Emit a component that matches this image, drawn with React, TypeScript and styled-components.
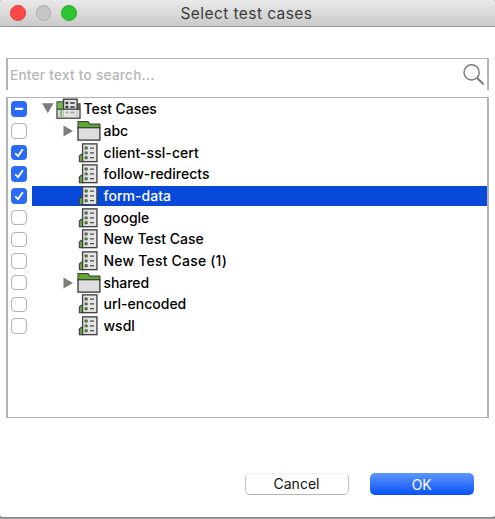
import React from "react";
import styled, { createGlobalStyle } from "styled-components";

const Global = createGlobalStyle`
  * { box-sizing: border-box; }
  html, body { margin: 0; padding: 0; background: #cfcfcf; }
  body { font-family: Inter, "Liberation Sans", sans-serif; overflow: hidden; }
`;

const Backdrop = styled.div`
  height: 519px;
  background: linear-gradient(#b4b4b4 0 516px, #7c7c7c 517px, #a8a8a8 519px);
`;

const Dialog = styled.div`
  width: 495px;
  height: 517px;
  background: #fff;
  border-radius: 3px;
  overflow: hidden;
  display: flex;
  flex-direction: column;
`;

const TitleBar = styled.header`
  height: 27px;
  flex: none;
  display: flex;
  align-items: center;
  background: linear-gradient(#e9e9e9, #cacaca);
  border-bottom: 1px solid #989898;
`;

const Lights = styled.div`
  display: flex;
  gap: 10px;
  padding-left: 10px;
  width: 180.5px;
`;

const Light = styled.span<{ $fill: string; $edge: string }>`
  width: 15.7px;
  height: 15.7px;
  border-radius: 50%;
  background: ${(p) => p.$fill};
  border: 1px solid ${(p) => p.$edge};
`;

const Title = styled.h1`
  margin: 0;
  padding-top: 2px;
  font-size: 15.5px;
  line-height: 24px;
  font-weight: 400;
  color: #3c3c3c;
  letter-spacing: 0.42px;
  white-space: nowrap;
`;

const SearchField = styled.label`
  flex: none;
  margin: 31px 6px 0;
  height: 32px;
  display: flex;
  align-items: center;
  justify-content: space-between;
  border: solid #b4b4b4;
  border-width: 1px 2px 0;
  padding: 0 2px 0 2px;
`;

const SearchInput = styled.input`
  flex: 1;
  border: 0;
  outline: 0;
  padding: 0;
  background: transparent;
  font: 500 13.5px Inter, sans-serif;
  letter-spacing: 0.3px;
  &::placeholder { color: #b5b5b5; opacity: 1; }
`;

const Tree = styled.ul`
  flex: none;
  list-style: none;
  margin: 7px 6px 0;
  padding: 0.3px 0 0;
  height: 321px;
  border: solid #b4b4b4;
  border-width: 1px 2px;
`;

const Row = styled.li`
  height: 21.7px;
  display: flex;
  align-items: center;
  padding-left: 3px;
`;

const Check = styled.span<{ $on: boolean }>`
  width: 16px;
  height: 15.5px;
  flex: none;
  margin-right: 5px;
  border-radius: 4px;
  display: flex;
  background: ${(p) => (p.$on ? "#2b69f8" : "#fff")};
  border: ${(p) => (p.$on ? "0" : "1px solid #b4b4b4")};
  box-shadow: ${(p) => (p.$on ? "none" : "inset 0 0 1px #ccc")};
`;

const Item = styled.div<{ $depth: number; $selected: boolean }>`
  flex: 1;
  height: 20px;
  display: flex;
  align-items: center;
  padding-left: ${(p) => 9.5 + p.$depth * 20}px;
  background: ${(p) => (p.$selected ? "#0849d9" : "transparent")};
  color: ${(p) => (p.$selected ? "#fff" : "#000")};
`;

const ArrowSlot = styled.span`
  width: 13px;
  height: 20px;
  flex: none;
  display: flex;
`;

const IconSlot = styled.span<{ $inset: number }>`
  width: 29px;
  height: 22px;
  padding-left: ${(p) => p.$inset}px;
  flex: none;
  display: flex;
`;

const Label = styled.span<{ $spacing: number }>`
  font-size: 14px;
  line-height: 20px;
  font-weight: 500;
  letter-spacing: ${(p) => p.$spacing}px;
  white-space: nowrap;
`;

const Footer = styled.footer`
  flex: none;
  margin-top: 55px;
  padding-right: 21px;
  display: flex;
  justify-content: flex-end;
  gap: 21px;
`;

const Button = styled.button<{ $primary?: boolean }>`
  width: 104px;
  height: 22px;
  padding: ${(p) => (p.$primary ? "1px 1px 0 0" : "0 1px 0 0")};
  border-radius: 5px;
  font: 400 14px/20px Inter, sans-serif;
  letter-spacing: ${(p) => (p.$primary ? -0.3 : 0)}px;
  color: ${(p) => (p.$primary ? "#fff" : "#111")};
  border: ${(p) => (p.$primary ? "0" : "1px solid #c2c2c2")};
  border-top-color: #f0f0f0;
  border-bottom-color: #b4b4b4;
  background: ${(p) => (p.$primary ? "linear-gradient(#5d97fb, #0a50fb)" : "#fff")};
`;

const Magnifier = () => (
  <svg width="23" height="24" viewBox="0 0 23 24" fill="none" stroke="#747984">
    <circle cx="9.6" cy="9.4" r="7.6" strokeWidth="1.4" />
    <path d="M15 15L21.6 21.2" strokeWidth="1.9" />
  </svg>
);

const DocIcon = () => (
  <svg width="27" height="22" viewBox="0 0 27 22">
    <path d="M2.4 19.8V14l2-1.6h2v7.4z" fill="#66ad3f" stroke="#454545" strokeWidth="1.2" />
    <rect x="5.7" y="1.7" width="14.6" height="18.1" fill="#e4e6e4" stroke="#454343" strokeWidth="1.4" />
    {[6, 10.9, 15.8].map((y) => (
      <g key={y}>
        <rect x="7.8" y={y - 1.5} width="3" height="3" rx="0.7" fill="#444" />
        <rect x="8.5" y={y - 0.8} width="1.7" height="1.6" fill="#519936" />
        <path d={`M13.2 ${y}h4`} stroke="#484848" strokeWidth="1.3" />
      </g>
    ))}
  </svg>
);

const FolderIcon = () => (
  <svg width="27" height="22" viewBox="0 0 27 22">
    <path d="M1 7.5V1.5H11.2L13 4H23.3V7.5z" fill="#5aad2d" stroke="#444" strokeWidth="1.2" />
    <rect x="1" y="7.6" width="22.3" height="12.7" fill="#dedcdc" stroke="#434141" strokeWidth="1.4" />
  </svg>
);

const RootIcon = () => (
  <svg width="27" height="22" viewBox="0 0 27 22">
    <path d="M1 11V3.8H7M22 11V5.8H24V11" fill="#72b54d" stroke="#444" strokeWidth="1.2" />
    <rect x="1.6" y="4.4" width="6" height="6.6" fill="#72b54d" />
    <rect x="7.5" y="1.2" width="13.6" height="18" fill="#e4e4e4" stroke="#413f3f" strokeWidth="1.4" />
    <path d="M9.5 5h2.8M9.5 9h2.8" stroke="#333" strokeWidth="2.4" />
    <path d="M14.2 5h4.5M14.2 9h4.5" stroke="#333" strokeWidth="1.4" />
    <rect x="1" y="11.2" width="23" height="9" fill="#e2e4e1" stroke="#444" strokeWidth="1.3" />
    <path d="M5 12v7.5" stroke="#8ec071" strokeWidth="2.6" />
    <path d="M7.5 11.9v7.6M21 11.9v7.6" stroke="#bbb" />
    <path d="M9.8 14.5h2.5M14.5 14.5h4" stroke="#a1a1a1" strokeWidth="1.5" />
  </svg>
);

const Arrow = ({ open }: { open: boolean }) => (
  <svg width="13" height="20" viewBox="0 0 13 20" fill="#7d7d7d">
    <path d={open ? "M0 4.3H11.6L5.8 14.3z" : "M1.5 4.6V15.4L11 10z"} />
  </svg>
);

const Tick = ({ mixed }: { mixed: boolean }) => (
  <svg width="16" height="15.5" viewBox="0 0 16 15.5" fill="none" stroke="#fff">
    {mixed ? (
      <path d="M4 7.8H12.2" strokeWidth="2.3" />
    ) : (
      <path d="M4.2 8.4L7.1 11.1L11.8 4.2" strokeWidth="1.9" />
    )}
  </svg>
);

type Kind = "root" | "folder" | "doc";
type Entry = { name: string; kind: Kind; state?: "on" | "mixed"; selected?: boolean; spacing: number };

const entries: Entry[] = [
  { name: "Test Cases", kind: "root", state: "mixed", spacing: -0.05 },
  { name: "abc", kind: "folder", spacing: 0 },
  { name: "client-ssl-cert", kind: "doc", state: "on", spacing: 0.05 },
  { name: "follow-redirects", kind: "doc", state: "on", spacing: 0 },
  { name: "form-data", kind: "doc", state: "on", selected: true, spacing: 0.02 },
  { name: "google", kind: "doc", spacing: -0.05 },
  { name: "New Test Case", kind: "doc", spacing: 0 },
  { name: "New Test Case (1)", kind: "doc", spacing: 0.2 },
  { name: "shared", kind: "folder", spacing: -0.05 },
  { name: "url-encoded", kind: "doc", spacing: 0 },
  { name: "wsdl", kind: "doc", spacing: 0 },
];

const icons = { root: RootIcon, folder: FolderIcon, doc: DocIcon };

export default function App() {
  return (
    <>
      <Global />
      <Backdrop>
        <Dialog>
          <TitleBar>
            <Lights>
              <Light $fill="#fc4846" $edge="#e23b39" />
              <Light $fill="#c6c6c6" $edge="#aaa" />
              <Light $fill="#2bc532" $edge="#22ad29" />
            </Lights>
            <Title>Select test cases</Title>
          </TitleBar>
          <SearchField>
            <SearchInput placeholder="Enter text to search..." />
            <Magnifier />
          </SearchField>
          <Tree>
            {entries.map((e) => {
              const Icon = icons[e.kind];
              return (
                <Row key={e.name}>
                  <Check $on={!!e.state}>{e.state && <Tick mixed={e.state === "mixed"} />}</Check>
                  <Item $depth={e.kind === "root" ? 0 : 1} $selected={!!e.selected}>
                    <ArrowSlot>{e.kind !== "doc" && <Arrow open={e.kind === "root"} />}</ArrowSlot>
                    <IconSlot $inset={e.kind === "root" ? 1.5 : 2.5}>
                      <Icon />
                    </IconSlot>
                    <Label $spacing={e.spacing}>{e.name}</Label>
                  </Item>
                </Row>
              );
            })}
          </Tree>
          <Footer>
            <Button>Cancel</Button>
            <Button $primary>OK</Button>
          </Footer>
        </Dialog>
      </Backdrop>
    </>
  );
}
